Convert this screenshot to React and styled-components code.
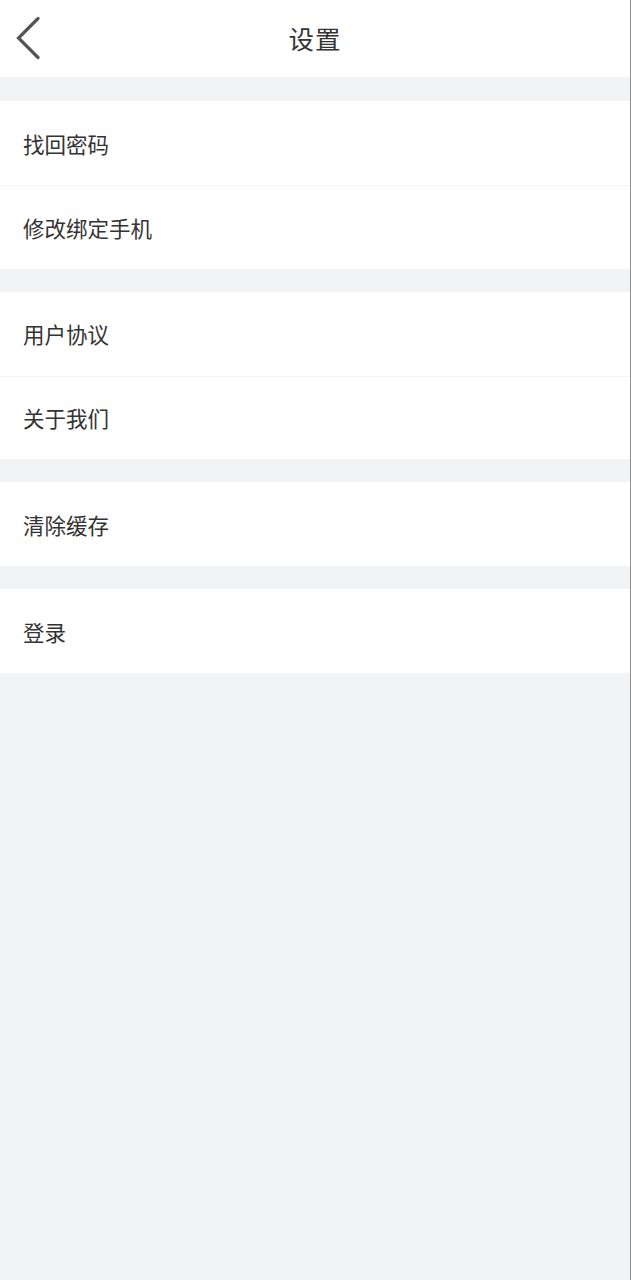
import React from "react";
import styled, { createGlobalStyle } from "styled-components";

const GlobalStyle = createGlobalStyle`
	html, body {
		margin: 0;
		padding: 0;
		background-color: #f2f3f5;
	}
	body {
		font-family: "Noto Sans CJK SC", "Noto Sans", sans-serif;
	}
	* {
		box-sizing: border-box;
	}
`;

const Page = styled("div")`
	min-height: 1280px;
	background-color: #f2f3f5;
	border-right: 1px solid #8e8e8e;
	display: flex;
	flex-direction: column;
	gap: 23px;
`;

const Header = styled("div")`
	position: relative;
	height: 77px;
	margin-bottom: 1px;
	padding-bottom: 2px;
	background-color: #fff;
	display: flex;
	align-items: center;
	justify-content: center;
`;

const BackButton = styled("div")`
	position: absolute;
	left: 14px;
	top: 17px;
	width: 30px;
	height: 44px;
	display: flex;
	align-items: center;
	justify-content: center;
`;

const Title = styled("div")`
	font-size: 25.5px;
	color: #333;
	letter-spacing: 1px;
`;

const Group = styled("div")`
	background-color: #fff;
	display: flex;
	flex-direction: column;
`;

const Row = styled("div")`
	height: ${(p) => (p.$divided ? "83.5px" : "84px")};
	padding-left: 23px;
	display: flex;
	align-items: center;
	font-size: 21.5px;
	color: #333;
	border-top: ${(p) => (p.$divided ? "1px solid #f3f3f3" : "none")};
`;

const BackIcon = () => (
	<svg width="30" height="44" viewBox="0 0 30 44">
		<path d="M24 1.5 L4.5 21 L24 40.5" fill="none" stroke="#555" strokeWidth="3.2" strokeLinecap="round" strokeLinejoin="miter" />
	</svg>
);

const groups = [["找回密码", "修改绑定手机"], ["用户协议", "关于我们"], ["清除缓存"], ["登录"]];

const App = () => {
	return (
		<>
			<GlobalStyle />
			<Page>
				<Header>
					<BackButton>
						<BackIcon />
					</BackButton>
					<Title>设置</Title>
				</Header>
				{groups.map((items, gi) => (
					<Group key={gi}>
						{items.map((label, i) => (
							<Row key={label} $divided={i > 0}>
								{label}
							</Row>
						))}
					</Group>
				))}
			</Page>
		</>
	);
};

export default App;
